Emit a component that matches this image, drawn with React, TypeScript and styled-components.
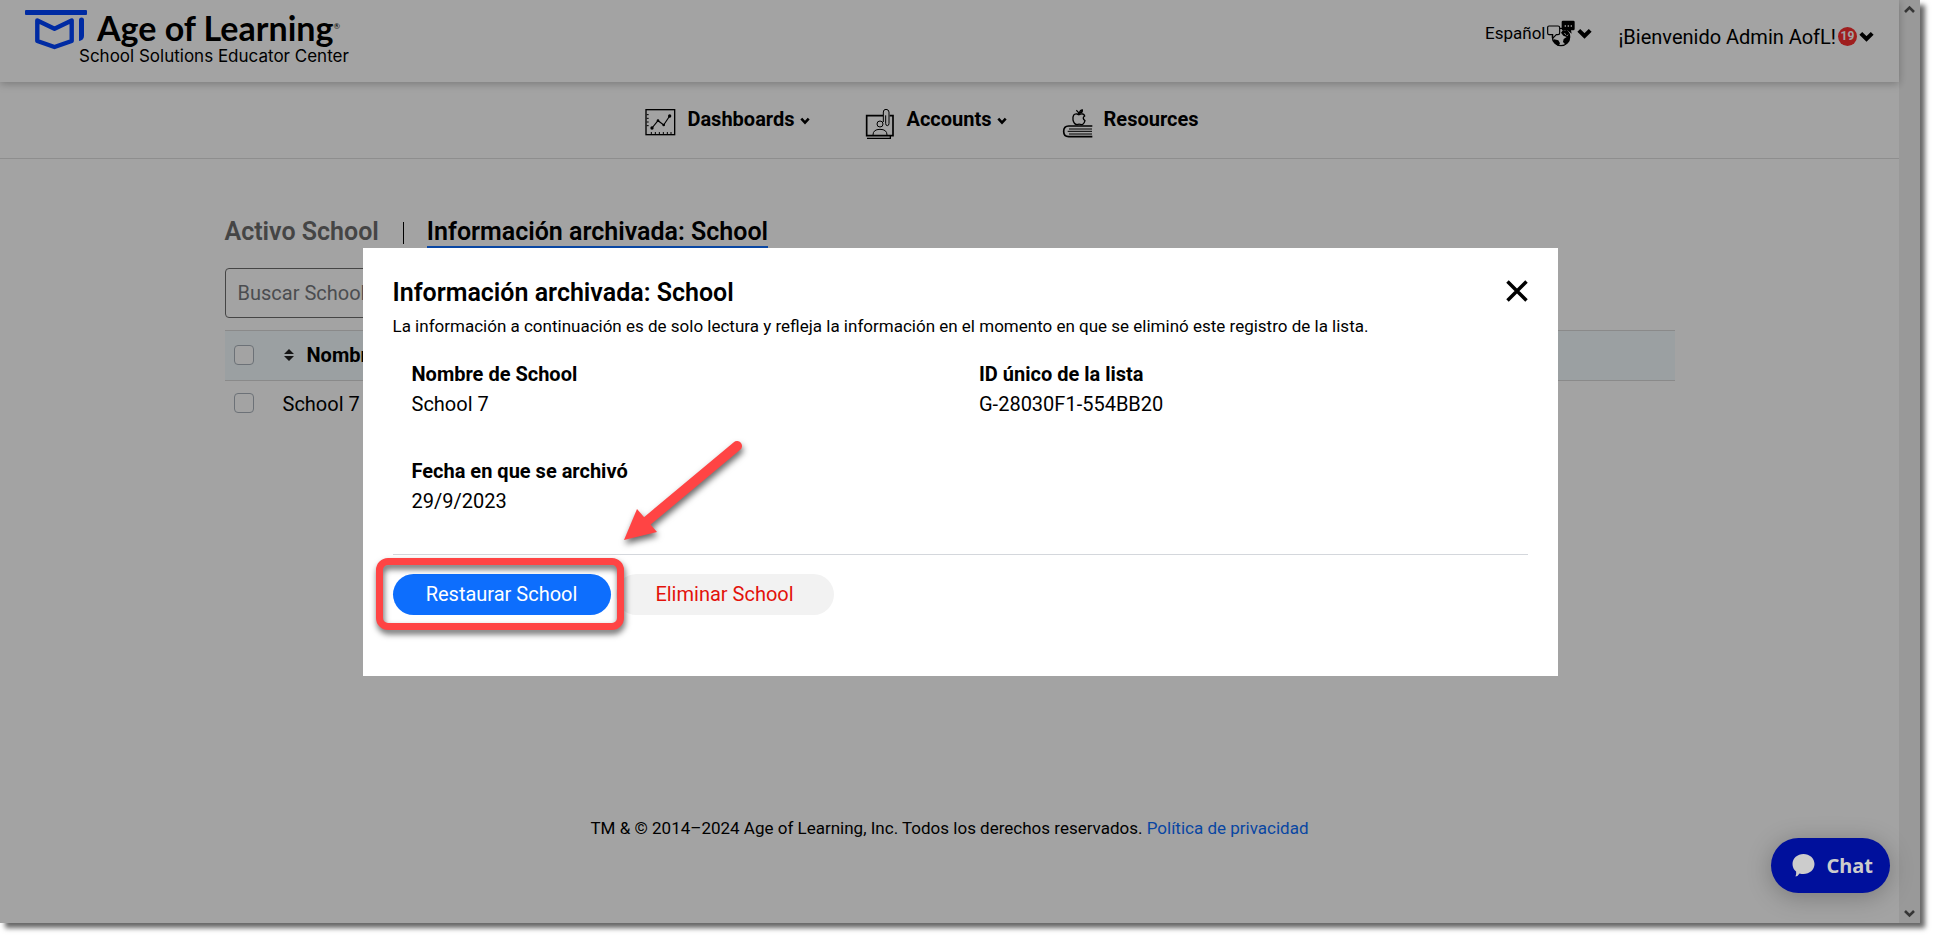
import React from 'react';
import styled, { createGlobalStyle } from 'styled-components';

const GlobalStyle = createGlobalStyle`
  *, *::before, *::after { box-sizing: border-box; }
  body {
    margin: 0;
    background: #fff;
    color: #000;
    font-family: Roboto, "Liberation Sans", sans-serif;
    font-size: 20px;
    line-height: 30px;
    overflow: hidden;
  }
  h1, h2, p, dl, dt, dd { margin: 0; }
  button, input { font: inherit; color: inherit; }
  button { border: 0; padding: 0; background: none; cursor: pointer; }
  a { color: inherit; text-decoration: none; }
  svg { display: block; flex: none; }
`;

const Frame = styled.div`
  position: relative;
  display: grid;
  grid-template-columns: minmax(0, 1fr) 21px;
  min-height: calc(100vh - 15px);
  margin: 0 15px 15px 0;
  background: #fff;
  box-shadow: 5px 5px 5px rgba(0, 0, 0, 0.6);
`;

const Page = styled.div`
  display: flex;
  flex-direction: column;
`;

const ScrollTrack = styled.div`
  display: flex;
  flex-direction: column;
  justify-content: space-between;
  align-items: center;
  padding: 5px 0;
  background: #f0f0f0;
`;

/* Header */
const Header = styled.header`
  position: relative;
  display: flex;
  justify-content: space-between;
  align-items: flex-start;
  height: 82px;
  padding: 0 25px;
  box-shadow: 0 2px 8px rgba(0, 0, 0, 0.25);
`;

const Brand = styled.a`
  display: block;
  padding-top: 10px;
`;

const BrandRow = styled.span`
  display: flex;
  gap: 10px;
  height: 36px;
`;

const BrandName = styled.span`
  font: 700 34px/36px Lato, Roboto, sans-serif;
`;

const Registered = styled.sup`
  font-size: 8px;
  line-height: 8px;
  font-weight: 400;
  vertical-align: 12px;
`;

const BrandTag = styled.span`
  display: block;
  padding-left: 54px;
  font: 400 17px/20px Inter, Roboto, sans-serif;
`;

const Account = styled.div`
  display: flex;
  align-items: flex-start;
  gap: 26px;
`;

const HeaderButton = styled.button<{ $size: number; $height: number }>`
  display: flex;
  align-items: center;
  gap: 2px;
  height: ${p => p.$height}px;
  font-size: ${p => p.$size}px;
`;

const Badge = styled.span`
  display: flex;
  align-items: center;
  justify-content: center;
  width: 19px;
  height: 19px;
  border-radius: 50%;
  background: #f92f2f;
  color: #fff;
  font-size: 12px;
  line-height: 19px;
  font-weight: 700;
`;

/* Navigation */
const Nav = styled.nav`
  display: flex;
  justify-content: center;
  align-items: flex-start;
  height: 77px;
  padding-top: 22px;
  border-bottom: 1px solid #dedede;
`;

const NavLink = styled.a`
  display: flex;
  align-items: flex-start;
  margin-right: 55px;
  font-weight: 700;
`;

const NavIcon = styled.svg`
  width: 31px;
  height: 32px;
  margin: 4px 11px 0 0;
`;

const NavCaret = styled.svg`
  width: 10px;
  height: 8px;
  margin: 13px 0 0 5px;
`;

/* Content */
const Main = styled.main`
  flex: 1;
  width: 100%;
  max-width: 1450px;
  margin: 0 auto;
  padding-top: 59px;
`;

const Tabs = styled.div`
  display: flex;
  align-items: center;
  margin-bottom: 20px;
`;

const Tab = styled.a<{ $active?: boolean }>`
  border-bottom: 2px solid ${p => (p.$active ? '#1070ff' : 'transparent')};
  color: ${p => (p.$active ? '#000' : '#6c6c6c')};
  font-size: 25px;
  line-height: 28px;
  font-weight: 600;
`;

const TabDivider = styled.span`
  width: 1px;
  height: 22px;
  margin: 0 23px 0 24px;
  background: #000;
`;

const Search = styled.input`
  display: block;
  width: 420px;
  height: 50px;
  margin-bottom: 12px;
  padding: 0 12px;
  border: 1px solid #6c6c6c;
  border-radius: 4px;
  background: #fff;
  &::placeholder { color: #76797d; opacity: 1; }
`;

const Table = styled.table`
  width: 100%;
  border-collapse: collapse;
  text-align: left;
`;

const HeadRow = styled.tr`
  height: 50px;
  border-top: 1px solid #d8d8d8;
  border-bottom: 1px solid #d8d8d8;
  background: #f3fbfd;
`;

const BodyRow = styled.tr`
  height: 46px;
`;

const CheckCell = styled.td`
  width: 58px;
  padding: 0 0 2px 9px;
`;

const NameHead = styled.th`
  padding: 0 0 2px;
`;

const NameCell = styled.td`
  padding: 0;
`;

const SortButton = styled.button`
  display: flex;
  align-items: center;
  gap: 13px;
  padding-left: 1px;
  font-weight: 700;
`;

const Checkbox = styled.input`
  appearance: none;
  display: block;
  width: 20px;
  height: 20px;
  margin: 0;
  border: 1px solid #a9b1bb;
  border-radius: 4px;
  background: #fff;
`;

const Footer = styled.footer`
  padding-bottom: 83px;
  text-align: center;
  font-size: 17px;
  line-height: 24px;
`;

const FooterLink = styled.a`
  color: #0d6efd;
`;

/* Dialog */
const Overlay = styled.div`
  position: absolute;
  inset: 0;
  display: flex;
  align-items: center;
  justify-content: center;
  background: rgba(0, 0, 0, 0.36);
`;

const Dialog = styled.section`
  width: 100%;
  max-width: 1195px;
  padding: 30px 30px 61px;
  background: #fff;
`;

const DialogHead = styled.div`
  display: flex;
  justify-content: space-between;
  height: 36px;
`;

const DialogTitle = styled.h2`
  font-size: 25px;
  line-height: 30px;
  font-weight: 600;
`;

const CloseButton = styled.button`
  width: 22px;
  height: 26px;
`;

const DialogNote = styled.p`
  font-size: 17px;
  line-height: 24px;
`;

const Details = styled.dl`
  display: grid;
  grid-template-columns: 1fr 1fr;
  row-gap: 37px;
  padding: 21px 0 38px;
  border-bottom: 1px solid #d4d7dc;
`;

const Detail = styled.div`
  padding-left: 19px;
`;

const DetailLabel = styled.dt`
  font-weight: 700;
`;

const DetailValue = styled.dd`
  font-weight: 400;
`;

const Actions = styled.div`
  display: flex;
  gap: 5px;
  padding-top: 19px;
`;

const Pill = styled.button<{ $primary?: boolean }>`
  width: 218px;
  height: 41px;
  border-radius: 21px;
  background: ${p => (p.$primary ? '#0d6efd' : '#f2f2f2')};
  color: ${p => (p.$primary ? '#fff' : '#e3120b')};
`;

const Highlighted = styled.div`
  position: relative;
  z-index: 1;
`;

const HighlightBox = styled.span`
  position: absolute;
  inset: -16px -13px -15px -17px;
  border: 7px solid #ff4444;
  border-radius: 12px;
  filter: drop-shadow(1px 4px 3px rgba(0, 0, 0, 0.6));
  pointer-events: none;
`;

const Arrow = styled.svg`
  position: absolute;
  left: 225px;
  bottom: 70px;
  overflow: visible;
  filter: drop-shadow(1px 4px 3px rgba(0, 0, 0, 0.6));
  pointer-events: none;
`;

const ChatButton = styled.button`
  position: absolute;
  right: 30px;
  bottom: 30px;
  display: flex;
  align-items: center;
  gap: 12px;
  height: 55px;
  padding: 0 17px 0 21px;
  border-radius: 28px;
  background: #00109c;
  color: #ccc;
  font-family: "Noto Sans", "Open Sans", sans-serif;
  font-weight: 700;
  box-shadow: 0 4px 24px rgba(0, 0, 0, 0.25);
`;

const Chevron = () => (
  <svg width="15" height="11" viewBox="0 0 15 11" aria-hidden="true">
    <path d="M1.8 2.3 7.5 8 13.2 2.3" fill="none" stroke="#000" strokeWidth="4" />
  </svg>
);

const Caret = () => (
  <NavCaret viewBox="0 0 10 8" aria-hidden="true">
    <path d="M1.3 1.7 5 5.6 8.7 1.7" fill="none" stroke="#000" strokeWidth="2.6" />
  </NavCaret>
);

const ScrollArrow = ({ down }: { down?: boolean }) => (
  <svg width="11" height="9" viewBox="0 0 11 9" aria-hidden="true">
    <path d={down ? 'M1 2 5.5 6.5 10 2' : 'M1 7 5.5 2.5 10 7'} fill="none" stroke="#555" strokeWidth="2.6" />
  </svg>
);

const LogoMark = () => (
  <svg width="62" height="40" viewBox="0 0 62 40" aria-hidden="true">
    <rect width="62" height="5" rx="1" fill="#0044ff" />
    <path d="M12.300 10.500 29.500 18.800 46.700 10.500 V31 L29.500 37 12.300 31Z" fill="none" stroke="#0044ff" strokeWidth="4.400" strokeLinejoin="round" />
    <path d="M54 10a2.500 2.500 0 0 1 5 0V26a5 5 0 0 1-5 5Z" fill="#0044ff" />
  </svg>
);

const LanguageIcon = () => (
  <svg width="28" height="27" viewBox="36 28 84 81" aria-hidden="true">
    <circle cx="78" cy="79" r="26" fill="none" stroke="#000" strokeWidth="4" />
    <path d="M57 86l13 3 5 9-5 8q-12-5-15-17Z" fill="#000" />
    <path d="M84 58l14 4q8 9 6 22-3 12-12 18l-8-8 2-9 9-6-10-4-7-9Z" fill="#000" />
    <path d="M88 68l5 4M95 76l4-4" stroke="#fff" strokeWidth="3" />
    <path d="M42 46H69q5 0 5 5V67q0 5-5 5H64L53 83V72H42q-4 0-4-4V50q0-4 4-4Z" fill="#fff" stroke="#000" strokeWidth="3.500" />
    <path d="M84 30h31q4 0 4 4v20q0 5-4 5h-7l2 10-13-10H84q-4 0-4-5V34q0-4 4-4Z" fill="#000" />
    <path d="M89 46h4M98 46h4M107 46h4" stroke="#fff" strokeWidth="4" />
  </svg>
);

const ChartIcon = () => (
  <NavIcon viewBox="17 24 93 96" fill="none" stroke="#000" strokeWidth="4" aria-hidden="true">
    <rect x="20" y="29" width="86" height="75" />
    <path d="M38 84 56 62 73 75 91 48" strokeWidth="3.500" />
    <g fill="#000" stroke="none">
      <circle cx="38" cy="84" r="5" />
      <circle cx="56" cy="62" r="4" />
      <circle cx="73" cy="75" r="4" />
      <circle cx="91" cy="48" r="5" />
    </g>
    <path d="M22 44h6M22 55h6M22 66h6M22 77h6M36 102v-6M48 102v-6M60 102v-6M72 102v-6M84 102v-6M95 102v-6" strokeWidth="3" />
  </NavIcon>
);

const RosterIcon = () => (
  <NavIcon viewBox="682 24 93 96" fill="none" stroke="#000" strokeWidth="4" aria-hidden="true">
    <path d="M736 47H687V107H766V47H756" strokeWidth="5" />
    <path d="M688 115H758V108" />
    <circle cx="727" cy="72" r="9" strokeWidth="3" />
    <path d="M706 105q0-17 21-17t21 17" strokeWidth="3" />
    <path d="M737 66V36q0-8 8-8t9 8V70q0 7-5 7t-5-7V46" strokeWidth="3" />
  </NavIcon>
);

const BookIcon = () => (
  <NavIcon viewBox="1267 26 93 96" fill="none" stroke="#000" strokeWidth="5" aria-hidden="true">
    <path d="M1358 80H1287q-15 0-15 16t15 16H1358" />
    <path d="M1288 89H1357M1284 96H1357M1288 104H1357" strokeWidth="3" />
    <path d="M1318 46q14-6 17 4-9 6 1 14-4 13-11 12-7-3-13 0-9-1-12-14-2-20 12-18Z" strokeWidth="4" />
    <path d="M1318 46q0-7-8-13M1319 42q2-10 9-10 1 8-9 10" strokeWidth="4" />
  </NavIcon>
);

const SortIcon = () => (
  <svg width="10" height="12" viewBox="0 0 10 12" aria-hidden="true">
    <path d="M5 0 10 5H0ZM0 7H10L5 12Z" fill="#222" />
  </svg>
);

const ChatIcon = () => (
  <svg width="23" height="23" viewBox="0 0 22 23" aria-hidden="true">
    <path d="M11 0c6 0 11 4.300 11 10s-5 10-11 10q-2 0-4-.6Q5.500 22 3 22.500q1-3 .6-5Q0 14.500 0 10C0 4.300 5 0 11 0Z" fill="#ccc" />
  </svg>
);

const details = [
  { label: 'Nombre de School', value: 'School 7' },
  { label: 'ID único de la lista', value: 'G-28030F1-554BB20' },
  { label: 'Fecha en que se archivó', value: '29/9/2023' },
];

export default function App() {
  return (
    <>
      <GlobalStyle />
      <Frame>
        <Page>
          <Header>
            <Brand href="#">
              <BrandRow>
                <LogoMark />
                <BrandName>Age of Learning<Registered>®</Registered></BrandName>
              </BrandRow>
              <BrandTag>School Solutions Educator Center</BrandTag>
            </Brand>
            <Account>
              <HeaderButton $size={17} $height={66}>
                Español
                <LanguageIcon />
                <Chevron />
              </HeaderButton>
              <HeaderButton $size={20} $height={73}>
                ¡Bienvenido Admin AofL!
                <Badge>19</Badge>
                <Chevron />
              </HeaderButton>
            </Account>
          </Header>
          <Nav>
            <NavLink href="#"><ChartIcon />Dashboards<Caret /></NavLink>
            <NavLink href="#"><RosterIcon />Accounts<Caret /></NavLink>
            <NavLink href="#"><BookIcon />Resources</NavLink>
          </Nav>
          <Main>
            <Tabs>
              <Tab href="#">Activo School</Tab>
              <TabDivider />
              <Tab href="#" $active>Información archivada: School</Tab>
            </Tabs>
            <Search type="text" placeholder="Buscar School" aria-label="Buscar School" />
            <Table>
              <thead>
                <HeadRow>
                  <CheckCell><Checkbox type="checkbox" aria-label="Seleccionar todo" /></CheckCell>
                  <NameHead scope="col"><SortButton><SortIcon />Nombre</SortButton></NameHead>
                </HeadRow>
              </thead>
              <tbody>
                <BodyRow>
                  <CheckCell><Checkbox type="checkbox" aria-label="School 7" /></CheckCell>
                  <NameCell>School 7</NameCell>
                </BodyRow>
              </tbody>
            </Table>
          </Main>
          <Footer>
            TM &amp; © 2014–2024 Age of Learning, Inc. Todos los derechos reservados.{' '}
            <FooterLink href="#">Política de privacidad</FooterLink>
          </Footer>
        </Page>
        <ScrollTrack>
          <ScrollArrow />
          <ScrollArrow down />
        </ScrollTrack>
        <Overlay>
          <Dialog role="dialog" aria-modal="true" aria-labelledby="dialog-title">
            <DialogHead>
              <DialogTitle id="dialog-title">Información archivada: School</DialogTitle>
              <CloseButton aria-label="Cerrar">
                <svg width="22" height="26" viewBox="0 0 22 26" aria-hidden="true">
                  <path d="M1.500 3.500 20.500 22.500M20.500 3.500 1.500 22.500" stroke="#000" strokeWidth="3.500" />
                </svg>
              </CloseButton>
            </DialogHead>
            <DialogNote>
              La información a continuación es de solo lectura y refleja la información en el momento en que se eliminó este registro de la lista.
            </DialogNote>
            <Details>
              {details.map(d => (
                <Detail key={d.label}>
                  <DetailLabel>{d.label}</DetailLabel>
                  <DetailValue>{d.value}</DetailValue>
                </Detail>
              ))}
            </Details>
            <Actions>
              <Highlighted>
                <Pill $primary>Restaurar School</Pill>
                <HighlightBox />
                <Arrow width="125" height="105" viewBox="618 440 125 105" aria-hidden="true">
                  <path d="M646 522 737 446" stroke="#ff4444" strokeWidth="10" strokeLinecap="round" />
                  <path d="M624 540 637 509 657 532Z" fill="#ff4444" />
                </Arrow>
              </Highlighted>
              <Pill>Eliminar School</Pill>
            </Actions>
          </Dialog>
        </Overlay>
        <ChatButton><ChatIcon />Chat</ChatButton>
      </Frame>
    </>
  );
}
